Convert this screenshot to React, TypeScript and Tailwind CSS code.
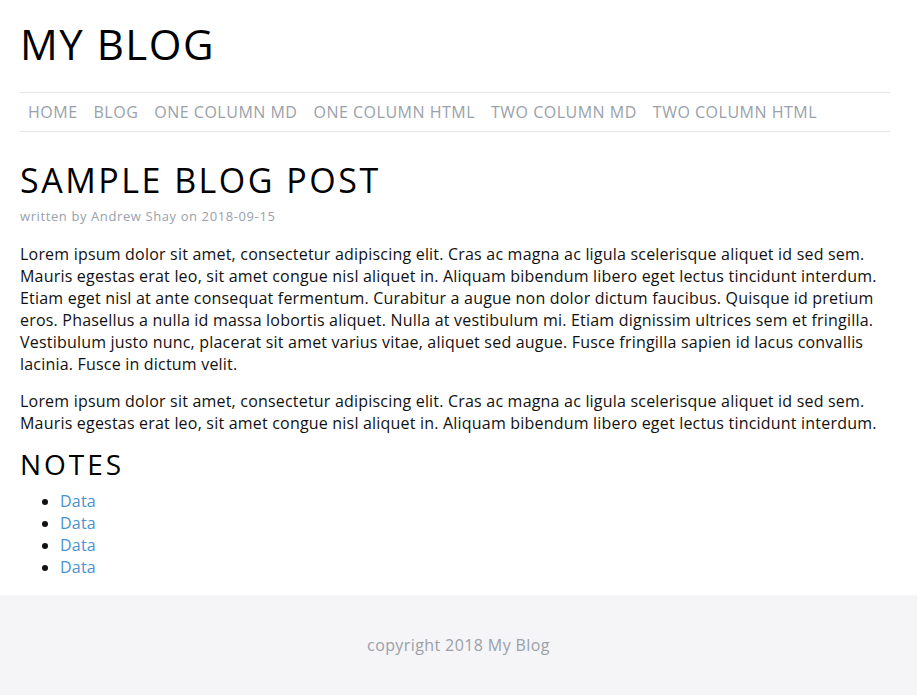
const nav = ['HOME', 'BLOG', 'ONE COLUMN MD', 'ONE COLUMN HTML', 'TWO COLUMN MD', 'TWO COLUMN HTML']

const para1 =
  'Lorem ipsum dolor sit amet, consectetur adipiscing elit. Cras ac magna ac ligula scelerisque aliquet id sed sem. Mauris egestas erat leo, sit amet congue nisl aliquet in. Aliquam bibendum libero eget lectus tincidunt interdum. Etiam eget nisl at ante consequat fermentum. Curabitur a augue non dolor dictum faucibus. Quisque id pretium eros. Phasellus a nulla id massa lobortis aliquet. Nulla at vestibulum mi. Etiam dignissim ultrices sem et fringilla. Vestibulum justo nunc, placerat sit amet varius vitae, aliquet sed augue. Fusce fringilla sapien id lacus convallis lacinia. Fusce in dictum velit.'

const para2 =
  'Lorem ipsum dolor sit amet, consectetur adipiscing elit. Cras ac magna ac ligula scelerisque aliquet id sed sem. Mauris egestas erat leo, sit amet congue nisl aliquet in. Aliquam bibendum libero eget lectus tincidunt interdum.'

export default function App() {
  return (
    <div className="min-h-[695px] flex flex-col bg-white text-[#111] font-['Open_Sans',sans-serif] tracking-[0.2px]">
      <div className="flex-1 pl-5 pr-[27px]">
        <header>
          <h1 className="pt-[18px] text-[42px] leading-[52px] tracking-[1.5px] text-black">MY BLOG</h1>
          <nav className="mt-[22px] border-y border-[#e5e5e5] h-[40px] flex items-center">
            {nav.map((item) => (
              <a key={item} href="#" className="px-2 text-[16px] text-[#9aa1aa] tracking-[0.5px]">
                {item}
              </a>
            ))}
          </nav>
        </header>

        <main className="pt-[28px]">
          <h2 className="text-[34px] leading-[40px] tracking-[2.5px] text-black">SAMPLE BLOG POST</h2>
          <p className="mt-[7px] text-[13px] leading-[18px] text-[#9aa1aa] tracking-[0.6px]">written by Andrew Shay on 2018-09-15</p>
          <p className="mt-[18px] text-[16px] leading-[22px]">{para1}</p>
          <p className="mt-[15px] text-[16px] leading-[22px]">{para2}</p>
          <h3 className="mt-[12px] text-[28px] leading-[36px] tracking-[3px] text-black">NOTES</h3>
          <ul className="mt-2 list-disc pl-10 pb-[10px]">
            {[0, 1, 2, 3].map((i) => (
              <li key={i} className="text-[16px] leading-[22px]">
                <a href="#" className="text-[#4a92cf]">Data</a>
              </li>
            ))}
          </ul>
        </main>
      </div>

      <footer className="h-[100px] bg-[#f5f5f7] flex items-center justify-center">
        <span className="text-[16px] text-[#9aa1aa] tracking-[0.4px]">copyright 2018 My Blog</span>
      </footer>
    </div>
  )
}
